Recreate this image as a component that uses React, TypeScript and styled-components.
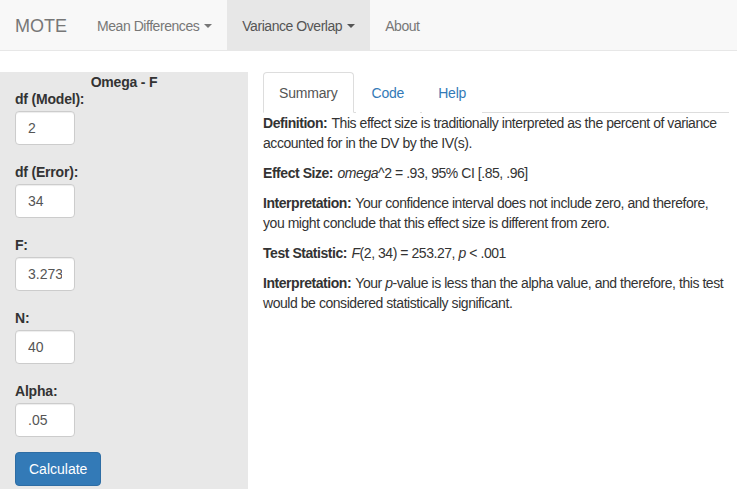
import styled, { createGlobalStyle } from 'styled-components';

const GlobalStyle = createGlobalStyle`
  html, body {
    margin: 0;
    padding: 0;
    background: #fff;
    font-family: "Liberation Sans", Arial, sans-serif;
    font-size: 14px;
    line-height: 20px;
    color: #333;
  }
  * {
    box-sizing: border-box;
  }
`;

const Navbar = styled.nav`
  display: flex;
  align-items: stretch;
  height: 51px;
  background-color: #f8f8f8;
  border-bottom: 1px solid #e7e7e7;
  margin-bottom: 21px;
  letter-spacing: -0.45px;
`;

const Brand = styled.a`
  display: flex;
  align-items: center;
  padding: 2px 15px 0;
  font-size: 18px;
  letter-spacing: 0;
  color: #777;
  text-decoration: none;
`;

const NavItem = styled.a<{ active?: boolean }>`
  display: flex;
  align-items: center;
  padding: 2px 15px 0;
  color: ${p => (p.active ? '#555' : '#777')};
  background-color: ${p => (p.active ? '#e7e7e7' : 'transparent')};
  text-decoration: none;
  cursor: pointer;
`;

const Caret = styled.span`
  display: inline-block;
  width: 0;
  height: 0;
  margin-left: 5px;
  border-top: 4px solid currentColor;
  border-left: 4px solid transparent;
  border-right: 4px solid transparent;
  vertical-align: middle;
`;

const Layout = styled.div`
  display: flex;
  align-items: flex-start;
`;

const Sidebar = styled.aside`
  width: 248px;
  flex: none;
  background-color: #e8e8e8;
  padding: 0 15px 20px;
  min-height: 440px;
`;

const SidebarTitle = styled.div`
  text-align: center;
  font-weight: bold;
  line-height: 16px;
  padding-top: 2px;
  margin-bottom: -1px;
  letter-spacing: -0.2px;
`;

const FormGroup = styled.div`
  margin-bottom: 17px;
`;

const Label = styled.label`
  display: block;
  font-weight: bold;
  margin-bottom: 2px;
  letter-spacing: -0.2px;
`;

const Input = styled.input`
  display: block;
  width: 60px;
  height: 34px;
  padding: 6px 12px;
  font-family: inherit;
  font-size: 14px;
  color: #555;
  background-color: #fff;
  border: 1px solid #ccc;
  border-radius: 4px;
  box-shadow: inset 0 1px 1px rgba(0, 0, 0, 0.075);
`;

const Button = styled.button`
  display: block;
  height: 34px;
  padding: 6px 13px;
  margin-top: -2px;
  font-family: inherit;
  font-size: 14px;
  color: #fff;
  background-color: #337ab7;
  border: 1px solid #2e6da4;
  border-radius: 4px;
  cursor: pointer;
`;

const Main = styled.main`
  flex: 1;
  padding: 0 8px 0 15px;
  letter-spacing: -0.45px;
`;

const Tabs = styled.ul`
  display: flex;
  list-style: none;
  margin: 0;
  padding: 0;
  border-bottom: 1px solid #ddd;
  height: 41px;
  letter-spacing: -0.2px;
`;

const Tab = styled.li<{ active?: boolean }>`
  margin-right: 2px;
  margin-bottom: -1px;
  padding: 10px 15px;
  height: 41px;
  border: 1px solid ${p => (p.active ? '#ddd' : 'transparent')};
  border-bottom-color: ${p => (p.active ? '#fff' : 'transparent')};
  border-radius: 4px 4px 0 0;
  background: #fff;
  color: ${p => (p.active ? '#555' : '#337ab7')};
  cursor: pointer;
`;

const Para = styled.p`
  margin: 0 0 10px;
`;

const Strong = styled.b`
  margin-right: 1px;
`;

const fields = [
  { label: 'df (Model):', value: '2' },
  { label: 'df (Error):', value: '34' },
  { label: 'F:', value: '3.273' },
  { label: 'N:', value: '40' },
  { label: 'Alpha:', value: '.05' },
];

export default function App() {
  return (
    <>
      <GlobalStyle />
      <Navbar>
        <Brand>MOTE</Brand>
        <NavItem>
          Mean Differences <Caret />
        </NavItem>
        <NavItem active>
          Variance Overlap <Caret />
        </NavItem>
        <NavItem>About</NavItem>
      </Navbar>
      <Layout>
        <Sidebar>
          <SidebarTitle>Omega - F</SidebarTitle>
          {fields.map(f => (
            <FormGroup key={f.label}>
              <Label>{f.label}</Label>
              <Input defaultValue={f.value} />
            </FormGroup>
          ))}
          <Button>Calculate</Button>
        </Sidebar>
        <Main>
          <Tabs>
            <Tab active>Summary</Tab>
            <Tab>Code</Tab>
            <Tab>Help</Tab>
          </Tabs>
          <Para>
            <Strong>Definition:</Strong> This effect size is traditionally interpreted as the percent of variance
            accounted for in the DV by the IV(s).
          </Para>
          <Para>
            <Strong>Effect Size:</Strong> <i>omega</i>^2 = .93, 95% CI [.85, .96]
          </Para>
          <Para>
            <Strong>Interpretation:</Strong> Your confidence interval does not include zero, and therefore,
            you might conclude that this effect size is different from zero.
          </Para>
          <Para>
            <Strong>Test Statistic:</Strong> <i>F</i>(2, 34) = 253.27, <i>p</i> &lt; .001
          </Para>
          <Para>
            <Strong>Interpretation:</Strong> Your <i>p</i>-value is less than the alpha value, and therefore, this test
            would be considered statistically significant.
          </Para>
        </Main>
      </Layout>
    </>
  );
}
